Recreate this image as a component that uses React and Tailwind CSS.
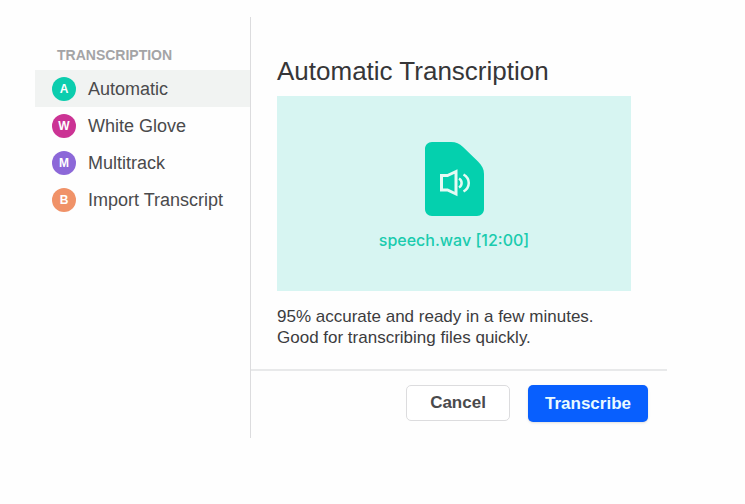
import React from 'react';

const options = [
    { letter: 'A', name: 'Automatic', color: 'bg-[#0ccdae]' },
    { letter: 'W', name: 'White Glove', color: 'bg-[#cb3394]' },
    { letter: 'M', name: 'Multitrack', color: 'bg-[#8c68d8]' },
    { letter: 'B', name: 'Import Transcript', color: 'bg-[#f09268]' },
];

const Sidebar = ({ selected }) => {
    return (
        <nav className="w-[216px] shrink-0 border-r border-[#dcdcde] pt-7">
            <h2 className="pl-[22px] mb-[5px] text-[14px] leading-5 font-bold uppercase text-[#a4a4a6]">Transcription</h2>
            <ul>
                {options.map((item) => (
                    <li key={item.name}>
                        <button
                            type="button"
                            className={`flex w-full h-[37px] items-center gap-3 pl-[17px] text-left text-[18px] text-[#4a4a4c] ${item.name === selected ? 'bg-[#f1f3f2]' : ''}`}
                        >
                            <span className={`flex size-6 shrink-0 items-center justify-center rounded-full text-[12px] font-bold text-white ${item.color}`}>
                                {item.letter}
                            </span>
                            <span className="pt-0.5 whitespace-nowrap">{item.name}</span>
                        </button>
                    </li>
                ))}
            </ul>
        </nav>
    );
};

const AudioFileIcon = () => {
    return (
        <svg width="59" height="74" viewBox="0 0 59 74" fill="none" aria-hidden="true">
            <path d="M7 0H26C31 0 34.5 1.5 38 5L53 19.5C57 23.5 59 27 59 32V67C59 71 56 74 52 74H7C3 74 0 71 0 67V7C0 3 3 0 7 0Z" fill="#04d0ae" />
            <path d="M16.5 33.5H22.5L31 29.5V52L22.5 48H16.5Z" stroke="#e4faf4" strokeWidth="3" />
            <path d="M34 36.5C37.5 38.5 37.5 43.5 34 45.5" stroke="#e4faf4" strokeWidth="2.5" />
            <path d="M38.5 32.5C45.5 36.5 45.5 45.5 38.5 49.5" stroke="#e4faf4" strokeWidth="2.5" />
        </svg>
    );
};

const App = () => {
    return (
        <div className="min-h-screen bg-[#fefefe] pt-[17px] pl-[35px] pr-[78px] pb-16 font-['Liberation_Sans',Arial,sans-serif]">
            <div className="flex">
                <Sidebar selected="Automatic" />
                <main className="flex-1 min-w-0">
                    <section className="pt-9 pl-[26px] pr-9 pb-[21px]">
                        <h1 className="mb-[7px] text-[26px] leading-9 text-[#363638]">Automatic Transcription</h1>
                        <div className="flex h-[195px] flex-col items-center bg-[#d7f5f2] pt-[46px]">
                            <AudioFileIcon />
                            <p className="mt-3 font-['Inter',sans-serif] text-[16px] leading-6 font-medium text-[#1acbae]">speech.wav [12:00]</p>
                        </div>
                        <p className="mt-[15px] text-[17px] leading-[21px] text-[#3c3c3e]">
                            95% accurate and ready in a few minutes.
                            <br />
                            Good for transcribing files quickly.
                        </p>
                    </section>
                    <footer className="flex justify-end gap-[18px] border-t-2 border-[#e8e9ea] pt-[14px] pr-[19px] pb-4">
                        <button type="button" className="h-9 w-[104px] rounded-[5px] border border-[#dcdcde] bg-white text-[17px] font-bold text-[#4a4a4c]">
                            Cancel
                        </button>
                        <button type="button" className="h-[37px] w-[120px] rounded-[5px] bg-[#085ffe] text-[17px] font-bold text-[#eafaff] shadow-sm">
                            Transcribe
                        </button>
                    </footer>
                </main>
            </div>
        </div>
    );
};

export default App;
